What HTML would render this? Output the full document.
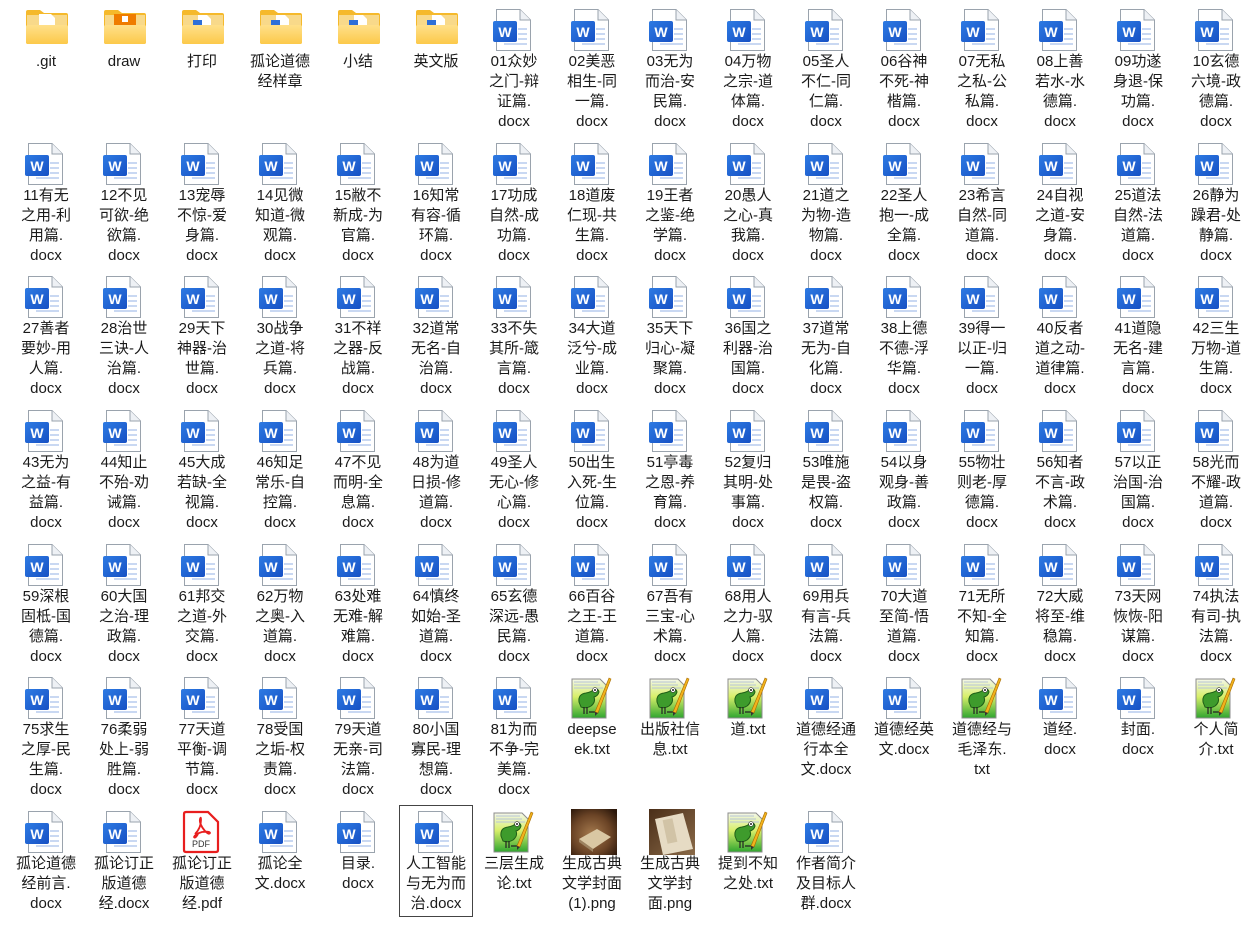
<!DOCTYPE html>
<html><head><meta charset="utf-8">
<style>
html,body{margin:0;padding:0;background:#fff;width:1256px;height:930px;overflow:hidden}
body{font-family:"Liberation Sans","Noto Sans CJK SC",sans-serif;color:#1a1a1a}
#g{position:absolute;left:7px;top:8px;display:grid;grid-template-columns:repeat(16,78px);grid-auto-rows:133.67px}
.c{position:relative;width:78px;text-align:center;font-size:15px;line-height:20px}
.c svg{position:absolute;top:0;left:17px}
.t{position:absolute;top:44px;left:0;width:78px;white-space:nowrap}
.f svg{left:18px;top:1px}
.n svg{left:17px}
.p svg{left:18px;top:-1px}
.pd svg{left:19px}
.sel{position:absolute;left:2px;top:-5px;width:72px;height:110px;border:1px solid #444}
</style></head><body>
<svg width="0" height="0" style="position:absolute">
<defs>
<linearGradient id="wb" x1="0" y1="0" x2="1" y2="1"><stop offset="0" stop-color="#2e7be3"/><stop offset="1" stop-color="#1650c4"/></linearGradient>
<linearGradient id="fy" x1="0" y1="0" x2="0" y2="1"><stop offset="0" stop-color="#ffe08a"/><stop offset="1" stop-color="#fcc94a"/></linearGradient>
<linearGradient id="ng" x1="0" y1="0" x2="0" y2="1"><stop offset="0" stop-color="#f4f7ea"/><stop offset=".45" stop-color="#d8ef6a"/><stop offset="1" stop-color="#2fa52f"/></linearGradient>
<symbol id="word" viewBox="0 0 44 44">
<path d="M4.5 1.5H28L38.5 12V42.5H4.5Z" fill="#fff" stroke="#9aa3ad"/>
<path d="M28 1.5V12H38.5" fill="#eef1f5" stroke="#9aa3ad"/>
<rect x="26" y="20" width="9" height="2" fill="#c9d8f2"/><rect x="26" y="25" width="9" height="2" fill="#c9d8f2"/><rect x="26" y="30" width="9" height="2" fill="#c9d8f2"/><rect x="12" y="35" width="23" height="2" fill="#c9d8f2"/>
<rect x="1" y="13" width="24" height="21" rx="2" fill="url(#wb)"/>
<text x="13" y="29" font-family="Liberation Sans,sans-serif" font-weight="bold" font-size="14" fill="#fff" text-anchor="middle">W</text>
</symbol>
<symbol id="fb" viewBox="0 0 44 36">
<path d="M1 3Q1 1 3 1H15L19 4H41Q43 4 43 6V33Q43 35 41 35H3Q1 35 1 33Z" fill="#f5b92b"/>
<rect x="2" y="6" width="40" height="20" fill="#f8d98a"/>
</symbol>
<symbol id="ff" viewBox="0 0 44 36">
<path d="M1 18Q1 16 3 16H41Q43 16 43 18V33Q43 35 41 35H3Q1 35 1 33Z" fill="url(#fy)"/>
</symbol>
<symbol id="npp" viewBox="0 0 42 44">
<path d="M2 3H30L36 9V42H2Z" fill="url(#ng)" stroke="#8c8c8c"/>
<g stroke="#b7c4d6" stroke-width="1"><line x1="4" y1="6" x2="28" y2="6"/><line x1="4" y1="9" x2="30" y2="9"/><line x1="4" y1="12" x2="33" y2="12"/></g>
<path d="M9 26Q8 18 16 17Q22 16 24 13Q28 12 29 16Q28 20 24 21Q26 26 21 30Q16 33 11 31Z" fill="#3e9b2c" stroke="#1f5f17" stroke-width="1"/>
<circle cx="25" cy="14" r="2.4" fill="#fff" stroke="#333" stroke-width=".6"/><circle cx="25" cy="14" r="1" fill="#222"/>
<path d="M14 31V38M17 31V38M19 36H26" stroke="#222" stroke-width="1.2"/>
<path d="M25 36L39 2L41 3L28 37Z" fill="#f2b21c" stroke="#a66b00" stroke-width=".6"/>
<path d="M25 36L28 37L25 40Z" fill="#333"/>
</symbol>
<symbol id="pdf" viewBox="0 0 38 44">
<path d="M4 2H26L36 12V40Q36 42 34 42H4Q2 42 2 40V4Q2 2 4 2Z" fill="#fff" stroke="#e81e1e" stroke-width="2.2"/>
<path d="M13 24Q19 18 19 10Q19 6 18 9Q17 14 23 21Q27 25 28 23Q28 21 20 22Q13 24 12 27Q13 29 16 24" fill="none" stroke="#e81e1e" stroke-width="1.8"/>
<text x="19" y="37" font-family="Liberation Sans,sans-serif" font-size="9" fill="#333" text-anchor="middle">PDF</text>
</symbol>
<symbol id="fw" viewBox="0 0 44 36"><use href="#fb"/><path d="M17 6H26L30 10V20H17Z" fill="#fff"/><rect x="12" y="11" width="9" height="7" fill="#2e6fd8"/><use href="#ff"/></symbol>
</defs></svg>
<div id="g">
<div class="c f"><svg width="44" height="36"><use href="#fb"/><path d="M14 5H26L30 9V20H14Z" fill="#fff"/><use href="#ff"/></svg><div class="t">.git</div></div>
<div class="c f"><svg width="44" height="36"><use href="#fb"/><rect x="11" y="5" width="22" height="14" fill="#ef7c00"/><rect x="19" y="7" width="6" height="6" fill="#fff"/><use href="#ff"/></svg><div class="t">draw</div></div>
<div class="c f"><svg width="44" height="36"><use href="#fw"/></svg><div class="t">打印</div></div>
<div class="c f"><svg width="44" height="36"><use href="#fw"/></svg><div class="t">孤论道德<br>经样章</div></div>
<div class="c f"><svg width="44" height="36"><use href="#fw"/></svg><div class="t">小结</div></div>
<div class="c f"><svg width="44" height="36"><use href="#fw"/></svg><div class="t">英文版</div></div>
<div class="c"><svg width="44" height="44"><use href="#word"/></svg><div class="t">01众妙<br>之门-辩<br>证篇.<br>docx</div></div>
<div class="c"><svg width="44" height="44"><use href="#word"/></svg><div class="t">02美恶<br>相生-同<br>一篇.<br>docx</div></div>
<div class="c"><svg width="44" height="44"><use href="#word"/></svg><div class="t">03无为<br>而治-安<br>民篇.<br>docx</div></div>
<div class="c"><svg width="44" height="44"><use href="#word"/></svg><div class="t">04万物<br>之宗-道<br>体篇.<br>docx</div></div>
<div class="c"><svg width="44" height="44"><use href="#word"/></svg><div class="t">05圣人<br>不仁-同<br>仁篇.<br>docx</div></div>
<div class="c"><svg width="44" height="44"><use href="#word"/></svg><div class="t">06谷神<br>不死-神<br>楷篇.<br>docx</div></div>
<div class="c"><svg width="44" height="44"><use href="#word"/></svg><div class="t">07无私<br>之私-公<br>私篇.<br>docx</div></div>
<div class="c"><svg width="44" height="44"><use href="#word"/></svg><div class="t">08上善<br>若水-水<br>德篇.<br>docx</div></div>
<div class="c"><svg width="44" height="44"><use href="#word"/></svg><div class="t">09功遂<br>身退-保<br>功篇.<br>docx</div></div>
<div class="c"><svg width="44" height="44"><use href="#word"/></svg><div class="t">10玄德<br>六境-政<br>德篇.<br>docx</div></div>

<div class="c"><svg width="44" height="44"><use href="#word"/></svg><div class="t">11有无<br>之用-利<br>用篇.<br>docx</div></div>
<div class="c"><svg width="44" height="44"><use href="#word"/></svg><div class="t">12不见<br>可欲-绝<br>欲篇.<br>docx</div></div>
<div class="c"><svg width="44" height="44"><use href="#word"/></svg><div class="t">13宠辱<br>不惊-爱<br>身篇.<br>docx</div></div>
<div class="c"><svg width="44" height="44"><use href="#word"/></svg><div class="t">14见微<br>知道-微<br>观篇.<br>docx</div></div>
<div class="c"><svg width="44" height="44"><use href="#word"/></svg><div class="t">15敝不<br>新成-为<br>官篇.<br>docx</div></div>
<div class="c"><svg width="44" height="44"><use href="#word"/></svg><div class="t">16知常<br>有容-循<br>环篇.<br>docx</div></div>
<div class="c"><svg width="44" height="44"><use href="#word"/></svg><div class="t">17功成<br>自然-成<br>功篇.<br>docx</div></div>
<div class="c"><svg width="44" height="44"><use href="#word"/></svg><div class="t">18道废<br>仁现-共<br>生篇.<br>docx</div></div>
<div class="c"><svg width="44" height="44"><use href="#word"/></svg><div class="t">19王者<br>之鉴-绝<br>学篇.<br>docx</div></div>
<div class="c"><svg width="44" height="44"><use href="#word"/></svg><div class="t">20愚人<br>之心-真<br>我篇.<br>docx</div></div>
<div class="c"><svg width="44" height="44"><use href="#word"/></svg><div class="t">21道之<br>为物-造<br>物篇.<br>docx</div></div>
<div class="c"><svg width="44" height="44"><use href="#word"/></svg><div class="t">22圣人<br>抱一-成<br>全篇.<br>docx</div></div>
<div class="c"><svg width="44" height="44"><use href="#word"/></svg><div class="t">23希言<br>自然-同<br>道篇.<br>docx</div></div>
<div class="c"><svg width="44" height="44"><use href="#word"/></svg><div class="t">24自视<br>之道-安<br>身篇.<br>docx</div></div>
<div class="c"><svg width="44" height="44"><use href="#word"/></svg><div class="t">25道法<br>自然-法<br>道篇.<br>docx</div></div>
<div class="c"><svg width="44" height="44"><use href="#word"/></svg><div class="t">26静为<br>躁君-处<br>静篇.<br>docx</div></div>

<div class="c"><svg width="44" height="44"><use href="#word"/></svg><div class="t">27善者<br>要妙-用<br>人篇.<br>docx</div></div>
<div class="c"><svg width="44" height="44"><use href="#word"/></svg><div class="t">28治世<br>三诀-人<br>治篇.<br>docx</div></div>
<div class="c"><svg width="44" height="44"><use href="#word"/></svg><div class="t">29天下<br>神器-治<br>世篇.<br>docx</div></div>
<div class="c"><svg width="44" height="44"><use href="#word"/></svg><div class="t">30战争<br>之道-将<br>兵篇.<br>docx</div></div>
<div class="c"><svg width="44" height="44"><use href="#word"/></svg><div class="t">31不祥<br>之器-反<br>战篇.<br>docx</div></div>
<div class="c"><svg width="44" height="44"><use href="#word"/></svg><div class="t">32道常<br>无名-自<br>治篇.<br>docx</div></div>
<div class="c"><svg width="44" height="44"><use href="#word"/></svg><div class="t">33不失<br>其所-箴<br>言篇.<br>docx</div></div>
<div class="c"><svg width="44" height="44"><use href="#word"/></svg><div class="t">34大道<br>泛兮-成<br>业篇.<br>docx</div></div>
<div class="c"><svg width="44" height="44"><use href="#word"/></svg><div class="t">35天下<br>归心-凝<br>聚篇.<br>docx</div></div>
<div class="c"><svg width="44" height="44"><use href="#word"/></svg><div class="t">36国之<br>利器-治<br>国篇.<br>docx</div></div>
<div class="c"><svg width="44" height="44"><use href="#word"/></svg><div class="t">37道常<br>无为-自<br>化篇.<br>docx</div></div>
<div class="c"><svg width="44" height="44"><use href="#word"/></svg><div class="t">38上德<br>不德-浮<br>华篇.<br>docx</div></div>
<div class="c"><svg width="44" height="44"><use href="#word"/></svg><div class="t">39得一<br>以正-归<br>一篇.<br>docx</div></div>
<div class="c"><svg width="44" height="44"><use href="#word"/></svg><div class="t">40反者<br>道之动-<br>道律篇.<br>docx</div></div>
<div class="c"><svg width="44" height="44"><use href="#word"/></svg><div class="t">41道隐<br>无名-建<br>言篇.<br>docx</div></div>
<div class="c"><svg width="44" height="44"><use href="#word"/></svg><div class="t">42三生<br>万物-道<br>生篇.<br>docx</div></div>

<div class="c"><svg width="44" height="44"><use href="#word"/></svg><div class="t">43无为<br>之益-有<br>益篇.<br>docx</div></div>
<div class="c"><svg width="44" height="44"><use href="#word"/></svg><div class="t">44知止<br>不殆-劝<br>诫篇.<br>docx</div></div>
<div class="c"><svg width="44" height="44"><use href="#word"/></svg><div class="t">45大成<br>若缺-全<br>视篇.<br>docx</div></div>
<div class="c"><svg width="44" height="44"><use href="#word"/></svg><div class="t">46知足<br>常乐-自<br>控篇.<br>docx</div></div>
<div class="c"><svg width="44" height="44"><use href="#word"/></svg><div class="t">47不见<br>而明-全<br>息篇.<br>docx</div></div>
<div class="c"><svg width="44" height="44"><use href="#word"/></svg><div class="t">48为道<br>日损-修<br>道篇.<br>docx</div></div>
<div class="c"><svg width="44" height="44"><use href="#word"/></svg><div class="t">49圣人<br>无心-修<br>心篇.<br>docx</div></div>
<div class="c"><svg width="44" height="44"><use href="#word"/></svg><div class="t">50出生<br>入死-生<br>位篇.<br>docx</div></div>
<div class="c"><svg width="44" height="44"><use href="#word"/></svg><div class="t">51亭毒<br>之恩-养<br>育篇.<br>docx</div></div>
<div class="c"><svg width="44" height="44"><use href="#word"/></svg><div class="t">52复归<br>其明-处<br>事篇.<br>docx</div></div>
<div class="c"><svg width="44" height="44"><use href="#word"/></svg><div class="t">53唯施<br>是畏-盗<br>权篇.<br>docx</div></div>
<div class="c"><svg width="44" height="44"><use href="#word"/></svg><div class="t">54以身<br>观身-善<br>政篇.<br>docx</div></div>
<div class="c"><svg width="44" height="44"><use href="#word"/></svg><div class="t">55物壮<br>则老-厚<br>德篇.<br>docx</div></div>
<div class="c"><svg width="44" height="44"><use href="#word"/></svg><div class="t">56知者<br>不言-政<br>术篇.<br>docx</div></div>
<div class="c"><svg width="44" height="44"><use href="#word"/></svg><div class="t">57以正<br>治国-治<br>国篇.<br>docx</div></div>
<div class="c"><svg width="44" height="44"><use href="#word"/></svg><div class="t">58光而<br>不耀-政<br>道篇.<br>docx</div></div>

<div class="c"><svg width="44" height="44"><use href="#word"/></svg><div class="t">59深根<br>固柢-国<br>德篇.<br>docx</div></div>
<div class="c"><svg width="44" height="44"><use href="#word"/></svg><div class="t">60大国<br>之治-理<br>政篇.<br>docx</div></div>
<div class="c"><svg width="44" height="44"><use href="#word"/></svg><div class="t">61邦交<br>之道-外<br>交篇.<br>docx</div></div>
<div class="c"><svg width="44" height="44"><use href="#word"/></svg><div class="t">62万物<br>之奥-入<br>道篇.<br>docx</div></div>
<div class="c"><svg width="44" height="44"><use href="#word"/></svg><div class="t">63处难<br>无难-解<br>难篇.<br>docx</div></div>
<div class="c"><svg width="44" height="44"><use href="#word"/></svg><div class="t">64慎终<br>如始-圣<br>道篇.<br>docx</div></div>
<div class="c"><svg width="44" height="44"><use href="#word"/></svg><div class="t">65玄德<br>深远-愚<br>民篇.<br>docx</div></div>
<div class="c"><svg width="44" height="44"><use href="#word"/></svg><div class="t">66百谷<br>之王-王<br>道篇.<br>docx</div></div>
<div class="c"><svg width="44" height="44"><use href="#word"/></svg><div class="t">67吾有<br>三宝-心<br>术篇.<br>docx</div></div>
<div class="c"><svg width="44" height="44"><use href="#word"/></svg><div class="t">68用人<br>之力-驭<br>人篇.<br>docx</div></div>
<div class="c"><svg width="44" height="44"><use href="#word"/></svg><div class="t">69用兵<br>有言-兵<br>法篇.<br>docx</div></div>
<div class="c"><svg width="44" height="44"><use href="#word"/></svg><div class="t">70大道<br>至简-悟<br>道篇.<br>docx</div></div>
<div class="c"><svg width="44" height="44"><use href="#word"/></svg><div class="t">71无所<br>不知-全<br>知篇.<br>docx</div></div>
<div class="c"><svg width="44" height="44"><use href="#word"/></svg><div class="t">72大威<br>将至-维<br>稳篇.<br>docx</div></div>
<div class="c"><svg width="44" height="44"><use href="#word"/></svg><div class="t">73天网<br>恢恢-阳<br>谋篇.<br>docx</div></div>
<div class="c"><svg width="44" height="44"><use href="#word"/></svg><div class="t">74执法<br>有司-执<br>法篇.<br>docx</div></div>

<div class="c"><svg width="44" height="44"><use href="#word"/></svg><div class="t">75求生<br>之厚-民<br>生篇.<br>docx</div></div>
<div class="c"><svg width="44" height="44"><use href="#word"/></svg><div class="t">76柔弱<br>处上-弱<br>胜篇.<br>docx</div></div>
<div class="c"><svg width="44" height="44"><use href="#word"/></svg><div class="t">77天道<br>平衡-调<br>节篇.<br>docx</div></div>
<div class="c"><svg width="44" height="44"><use href="#word"/></svg><div class="t">78受国<br>之垢-权<br>责篇.<br>docx</div></div>
<div class="c"><svg width="44" height="44"><use href="#word"/></svg><div class="t">79天道<br>无亲-司<br>法篇.<br>docx</div></div>
<div class="c"><svg width="44" height="44"><use href="#word"/></svg><div class="t">80小国<br>寡民-理<br>想篇.<br>docx</div></div>
<div class="c"><svg width="44" height="44"><use href="#word"/></svg><div class="t">81为而<br>不争-完<br>美篇.<br>docx</div></div>
<div class="c n"><svg width="42" height="44"><use href="#npp"/></svg><div class="t">deepse<br>ek.txt</div></div>
<div class="c n"><svg width="42" height="44"><use href="#npp"/></svg><div class="t">出版社信<br>息.txt</div></div>
<div class="c n"><svg width="42" height="44"><use href="#npp"/></svg><div class="t">道.txt</div></div>
<div class="c"><svg width="44" height="44"><use href="#word"/></svg><div class="t">道德经通<br>行本全<br>文.docx</div></div>
<div class="c"><svg width="44" height="44"><use href="#word"/></svg><div class="t">道德经英<br>文.docx</div></div>
<div class="c n"><svg width="42" height="44"><use href="#npp"/></svg><div class="t">道德经与<br>毛泽东.<br>txt</div></div>
<div class="c"><svg width="44" height="44"><use href="#word"/></svg><div class="t">道经.<br>docx</div></div>
<div class="c"><svg width="44" height="44"><use href="#word"/></svg><div class="t">封面.<br>docx</div></div>
<div class="c n"><svg width="42" height="44"><use href="#npp"/></svg><div class="t">个人简<br>介.txt</div></div>

<div class="c"><svg width="44" height="44"><use href="#word"/></svg><div class="t">孤论道德<br>经前言.<br>docx</div></div>
<div class="c"><svg width="44" height="44"><use href="#word"/></svg><div class="t">孤论订正<br>版道德<br>经.docx</div></div>
<div class="c pd"><svg width="38" height="44"><use href="#pdf"/></svg><div class="t">孤论订正<br>版道德<br>经.pdf</div></div>
<div class="c"><svg width="44" height="44"><use href="#word"/></svg><div class="t">孤论全<br>文.docx</div></div>
<div class="c"><svg width="44" height="44"><use href="#word"/></svg><div class="t">目录.<br>docx</div></div>
<div class="c"><div class="sel"></div><svg width="44" height="44"><use href="#word"/></svg><div class="t">人工智能<br>与无为而<br>治.docx</div></div>
<div class="c n"><svg width="42" height="44"><use href="#npp"/></svg><div class="t">三层生成<br>论.txt</div></div>
<div class="c p"><svg width="46" height="46"><defs><radialGradient id="b1" cx=".45" cy=".55" r=".7"><stop offset="0" stop-color="#a57a4e"/><stop offset=".6" stop-color="#6b4426"/><stop offset="1" stop-color="#2c180b"/></radialGradient></defs><rect width="46" height="46" fill="url(#b1)"/><path d="M8 30L26 20L40 28L22 40Z" fill="#d9c7a3"/><path d="M8 30L22 40V43L8 33Z" fill="#9c8260"/></svg><div class="t">生成古典<br>文学封面<br>(1).png</div></div>
<div class="c p"><svg width="46" height="46"><defs><linearGradient id="b2" x1="0" y1="0" x2="1" y2="1"><stop offset="0" stop-color="#4a2e18"/><stop offset="1" stop-color="#8a6a48"/></linearGradient></defs><rect width="46" height="46" fill="url(#b2)"/><path d="M6 10L34 4L44 40L14 46Z" fill="#e6dbc4"/><rect x="16" y="10" width="10" height="24" fill="#d1c3a6" transform="rotate(-12 21 22)"/></svg><div class="t">生成古典<br>文学封<br>面.png</div></div>
<div class="c n"><svg width="42" height="44"><use href="#npp"/></svg><div class="t">提到不知<br>之处.txt</div></div>
<div class="c"><svg width="44" height="44"><use href="#word"/></svg><div class="t">作者简介<br>及目标人<br>群.docx</div></div>
</div>
</body></html>
